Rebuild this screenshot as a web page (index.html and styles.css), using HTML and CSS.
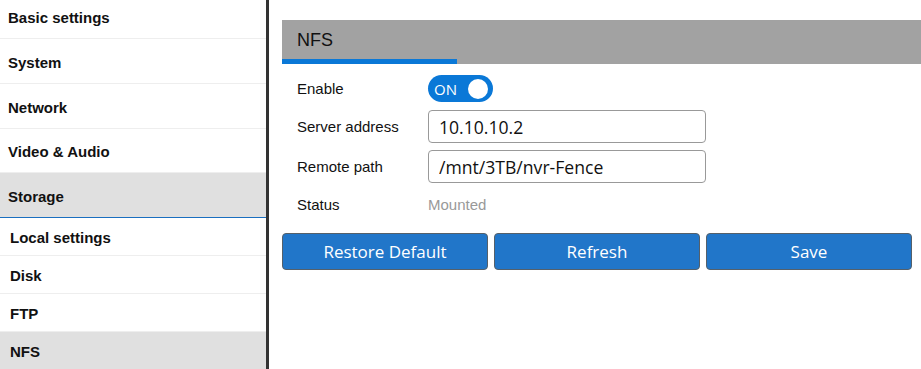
FILE: index.html
```html
<!DOCTYPE html>
<html lang="en">
<head>
    <meta charset="UTF-8">
    <meta name="viewport" content="width=device-width, initial-scale=1.0">
    <title>Storage - NFS</title>
    <link rel="stylesheet" href="styles.css">
</head>
<body>
    <div class="layout">
        <!-- Left menu -->
        <nav class="sidebar">
            <ul class="menu">
                <li class="menu-item">Basic settings</li>
                <li class="menu-item">System</li>
                <li class="menu-item">Network</li>
                <li class="menu-item">Video &amp; Audio</li>
                <li class="menu-item open">Storage</li>
                <li class="sub-item">Local settings</li>
                <li class="sub-item">Disk</li>
                <li class="sub-item">FTP</li>
                <li class="sub-item active">NFS</li>
            </ul>
        </nav>

        <main class="content">
            <div class="panel-title">
                <span>NFS</span>
            </div>

            <div class="form">
                <div class="form-row toggle-row">
                    <label>Enable</label>
                    <div class="toggle">
                        <span class="toggle-text">ON</span>
                        <span class="toggle-knob"></span>
                    </div>
                </div>
                <div class="form-row">
                    <label for="serverAddress">Server address</label>
                    <input type="text" id="serverAddress" value="10.10.10.2">
                </div>
                <div class="form-row">
                    <label for="remotePath">Remote path</label>
                    <input type="text" id="remotePath" value="/mnt/3TB/nvr-Fence">
                </div>
                <div class="form-row status-row">
                    <label>Status</label>
                    <span class="status">Mounted</span>
                </div>
            </div>

            <div class="actions">
                <button>Restore Default</button>
                <button>Refresh</button>
                <button>Save</button>
            </div>
        </main>
    </div>
</body>
</html>
```

FILE: styles.css
```css
body {
    margin: 0;
    background-color: #ffffff;
    color: #111111;
    font-family: "Liberation Sans", Arial, sans-serif;
    overflow: hidden;
}

.layout {
    display: flex;
    height: 369px;
}

.sidebar {
    width: 266px;
    flex-shrink: 0;
    border-right: 3px solid #333333;
    overflow: hidden;
}

.menu {
    list-style: none;
    margin: -6px 0 0 0;
    padding: 0;
}

.menu-item {
    height: 44px;
    line-height: 47px;
    padding-left: 8px;
    font-size: 15px;
    font-weight: bold;
    border-bottom: 1px solid #eeeeee;
}

/* the row before Storage is a pixel shorter in the original */
.menu-item:nth-child(4) {
    height: 43px;
    line-height: 46px;
}

.menu-item.open {
    background-color: #e0e0e0;
    border-bottom: 1px solid #1a6fc0;
    line-height: 47px;
}

.sub-item {
    height: 37px;
    line-height: 39px;
    padding-left: 10px;
    font-size: 15px;
    font-weight: bold;
    border-bottom: 1px solid #eeeeee;
}

.sub-item.active {
    background-color: #e0e0e0;
    border-bottom: none;
}

.content {
    flex: 1;
    padding: 20px 9px 0 13px;
}

.panel-title {
    height: 44px;
    margin-right: -9px;
    background-color: #a2a2a2;
    position: relative;
}

.panel-title span {
    display: block;
    padding-left: 15px;
    line-height: 40px;
    font-size: 18px;
    color: #111111;
}

.panel-title::after {
    content: "";
    position: absolute;
    left: 0;
    bottom: 0;
    width: 175px;
    height: 5px;
    background-color: #0a78d7;
}

.form {
    padding: 11px 0 0 15px;
}

.form-row {
    display: flex;
    align-items: center;
    margin-bottom: 7px;
}

.toggle-row {
    margin-bottom: 8px;
}

.form-row label {
    width: 131px;
    font-size: 15px;
    color: #111111;
}

.form-row input {
    width: 278px;
    height: 33px;
    box-sizing: border-box;
    border: 1px solid #999999;
    border-radius: 4px;
    padding: 0 10px;
    font-family: "Open Sans", sans-serif;
    font-size: 17.6px;
    color: #111111;
}

.toggle {
    width: 65px;
    height: 27px;
    border-radius: 14px;
    background-color: #0a78d7;
    display: flex;
    align-items: center;
    justify-content: space-between;
    padding: 0 5px 0 6px;
    box-sizing: border-box;
}

.toggle-text {
    color: #ffffff;
    font-family: "Open Sans", sans-serif;
    font-size: 15px;
}

.toggle-knob {
    width: 20px;
    height: 20px;
    border-radius: 50%;
    background-color: #ffffff;
}

.status-row {
    height: 28px;
    margin-top: 5px;
}

.status {
    color: #999999;
    font-size: 15px;
}

.actions {
    display: flex;
    gap: 6px;
    margin-top: 15px;
}

.actions button {
    width: 206px;
    height: 37px;
    background-color: #2176c9;
    color: #ffffff;
    border: 1px solid #55606a;
    border-radius: 4px;
    font-family: "Open Sans", sans-serif;
    font-size: 17px;
    cursor: pointer;
}

.actions button:hover {
    background-color: #1b66b0;
}
```
